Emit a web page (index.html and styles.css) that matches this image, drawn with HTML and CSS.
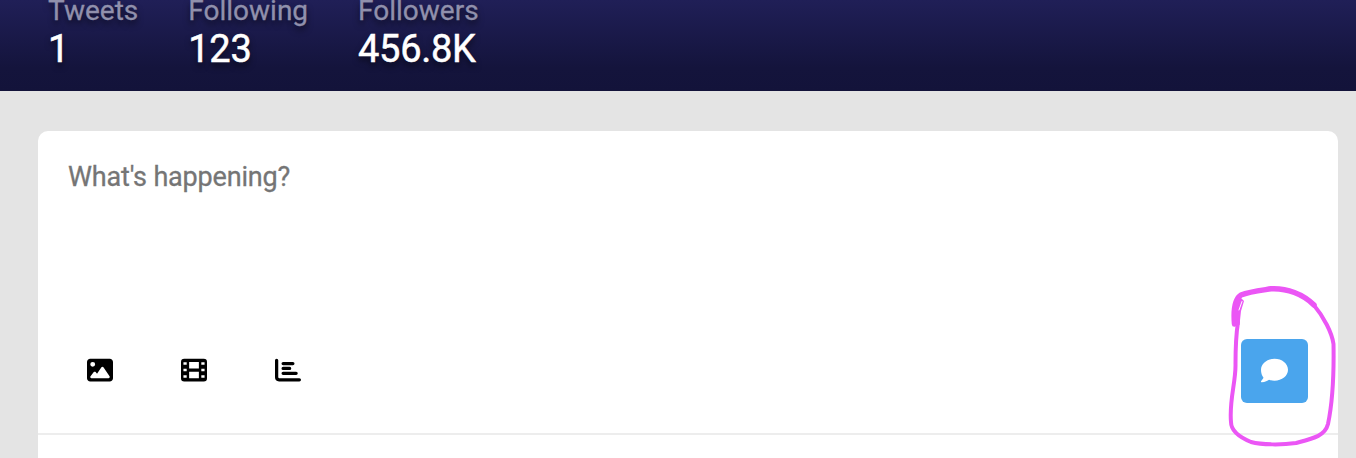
FILE: index.html
```html
<!DOCTYPE html>
<html lang="en">
<head>
<meta charset="utf-8">
<title>Profile</title>
<link rel="stylesheet" href="styles.css">
</head>
<body>
<header class="banner">
  <div class="stat"><span class="label">Tweets</span><span class="value">1</span></div>
  <div class="stat"><span class="label">Following</span><span class="value">123</span></div>
  <div class="stat"><span class="label">Followers</span><span class="value">456.8K</span></div>
</header>
<main class="content">
  <section class="card">
    <div class="composer">
      <div class="placeholder">What's happening?</div>
      <div class="actions">
        <div class="tools">
          <svg class="icon" viewBox="0 0 512 512"><path d="M0 96C0 60.700 28.700 32 64 32H448c35.300 0 64 28.700 64 64V416c0 35.300-28.700 64-64 64H64c-35.300 0-64-28.700-64-64V96zM323.800 202.500c-4.500-6.600-11.900-10.500-19.800-10.500s-15.400 3.900-19.800 10.500l-87 127.600L170.700 297c-4.600-5.700-11.500-9-18.700-9s-14.200 3.300-18.700 9l-64 80c-5.800 7.200-6.900 17.100-2.900 25.400s12.400 13.600 21.600 13.600h336c8.900 0 17.100-4.900 21.200-12.800s3.600-17.400-1.400-24.700l-120-176zM112 192a48 48 0 1 0 0-96 48 48 0 1 0 0 96z"/></svg>
          <svg class="icon" viewBox="0 0 512 512"><path fill-rule="evenodd" d="M64 32H448a64 64 0 0 1 64 64V416a64 64 0 0 1-64 64H64a64 64 0 0 1-64-64V96A64 64 0 0 1 64 32zM48 104v48h64v-48zM48 232v48h64v-48zM48 360v48h64v-48zM400 104v48h64v-48zM400 232v48h64v-48zM400 360v48h64v-48zM160 96V224H352V96zM160 288V416H352V288z"/></svg>
          <svg class="icon" viewBox="0 0 512 512"><path class="axis" d="M32 64V400a48 48 0 0 0 48 48H480"/><path class="bars" d="M160 128H352M160 224H288M160 320H416"/></svg>
        </div>
        <div class="send">
          <svg class="icon" viewBox="0 0 512 512"><path d="M512 240c0 114.900-114.600 208-256 208c-37.100 0-72.300-6.400-104.100-17.900c-11.900 8.700-31.300 20.600-54.300 30.600C73.600 471.100 44.700 480 16 480c-6.500 0-12.300-3.900-14.800-9.900s-1.100-12.800 3.400-17.400c6-6 36.500-42 43.100-60.700C17.700 352.600 0 298.600 0 240C0 125.100 114.600 32 256 32s256 93.100 256 208z"/></svg>
        </div>
      </div>
    </div>
  </section>
</main>
<svg class="scribble" viewBox="1220 280 136 178">
  <path class="thick" d="M1234.500 324C1233.500 312 1234.500 299 1241 295C1250 291.500 1264 290 1271 288.800C1287 288 1303 294 1314 305"/>
  <path class="line" d="M1313 304C1324 317 1332 333 1333.500 344C1334 372 1333 400 1328 424C1325 436 1313 438.500 1296 443C1282 445 1262 445 1251 442C1239 437 1231 430 1231 422C1229 400 1236 382 1235.500 364C1235.500 346 1236 335 1238 322"/>
  <path class="fill" d="M1232 325L1235 299L1240 297L1244 301L1241 311L1239.500 325z"/>
  <path class="gap" d="M1242 301.500L1239 310"/>
</svg>
</body>
</html>
```
FILE: styles.css
```css
* { box-sizing: border-box; }
body {
  margin: 0;
  height: 458px;
  overflow: hidden;
  background: #e4e4e4;
  font-family: Roboto, sans-serif;
}
.banner {
  display: flex;
  align-items: flex-end;
  gap: 50px;
  height: 91px;
  padding: 0 48px 19px;
  background: linear-gradient(#201f57 0, #14143c 75%, #13133a 100%);
  text-shadow: 0 4px 6px rgba(0, 0, 0, .6);
}
.stat { display: flex; flex-direction: column; }
.label { font-size: 28px; line-height: 33px; color: #9090ac; -webkit-text-stroke: .3px #9090ac; }
.value { font-size: 38px; line-height: 45px; letter-spacing: -.3px; color: #fff; -webkit-text-stroke: .5px #fff; }
.content { padding: 40px 18px 0 38px; }
.card { height: 327px; background: #fff; border-radius: 10px 10px 0 0; }
.composer {
  display: flex;
  flex-direction: column;
  justify-content: space-between;
  height: 304px;
  padding: 30px;
  border-bottom: 2px solid #ededed;
}
.placeholder { font-size: 27px; line-height: 32px; letter-spacing: -.18px; color: #757575; -webkit-text-stroke: .3px #757575; }
.actions { display: flex; justify-content: space-between; align-items: center; }
.tools { display: flex; gap: 68px; padding-left: 19px; }
.icon { display: block; width: 26px; height: 26px; }
.tools .icon { margin-top: -2px; }
.axis, .bars { fill: none; stroke: #000; stroke-width: 64; stroke-linecap: round; }
.send {
  display: flex;
  align-items: center;
  justify-content: center;
  width: 67px;
  height: 64px;
  padding-bottom: 2px;
  border-radius: 6px;
  background: #4aa5ed;
}
.send .icon { width: 27px; height: 27px; fill: #fff; }
.scribble { position: absolute; left: 1220px; top: 280px; width: 136px; height: 178px; fill: none; stroke: #eb56f5; stroke-linecap: round; stroke-linejoin: round; }
.thick { stroke-width: 5.500; }
.line { stroke-width: 4; }
.fill { fill: #eb56f5; stroke: none; }
.gap { stroke: #fff; stroke-width: 1; }
```
